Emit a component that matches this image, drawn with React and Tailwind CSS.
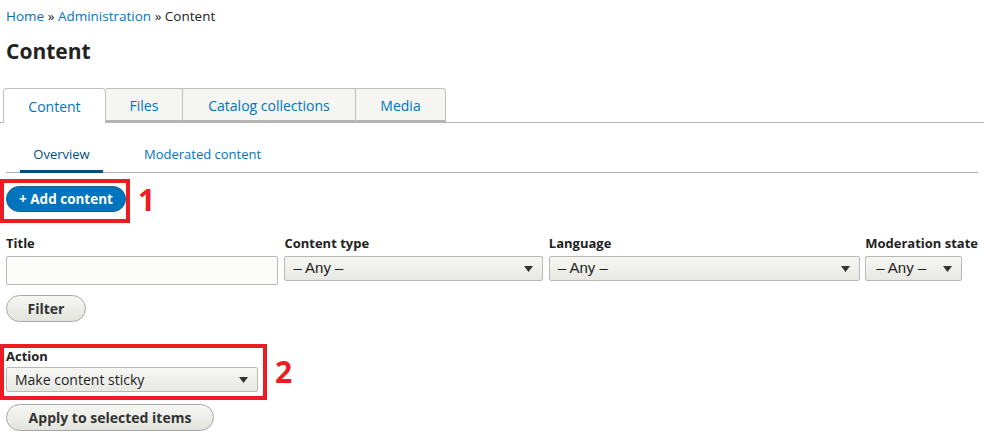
import React from "react";

const Caret = () => (
  <svg width="9" height="6" viewBox="0 0 9 6" className="shrink-0">
    <path d="M0 0 L9 0 L4.5 6 Z" fill="#333" />
  </svg>
);

const Select = ({ value, className, font }) => (
  <div
    className={
      "flex items-center justify-between h-[25px] pl-2 pr-[9px] border border-[#b8b8b8] rounded-[2px] bg-gradient-to-b from-[#f6f6f3] to-[#e8e8e3] text-[#222] " +
      className
    }
    style={{ fontFamily: font || '"Liberation Sans", Arial, sans-serif' }}
  >
    <span>{value}</span>
    <Caret />
  </div>
);

const tabs = [
  { label: "Content", w: "w-[103px]", active: true },
  { label: "Files", w: "w-[77px]" },
  { label: "Catalog collections", w: "w-[173px]" },
  { label: "Media", w: "w-[90px]" },
];

export default function App() {
  return (
    <div
      className="w-[984px] h-[436px] bg-white overflow-hidden text-[13px] text-[#222]"
      style={{ fontFamily: '"Open Sans", "Noto Sans", sans-serif' }}
    >
      <div className="px-[6px] pt-[6px]">
        <div className="h-[20px] leading-[20px] text-[13.5px]">
          <a className="text-[#0074bd]">Home</a> » <a className="text-[#0074bd]">Administration</a> » Content
        </div>
        <h1 className="mt-[12px] text-[21px] leading-[26px] font-bold text-[#222]">Content</h1>
      </div>

      <div className="mt-[24px] flex border-b border-[#b3b3b3] pl-[3px] h-[35px]">
        {tabs.map((t) => (
          <div
            key={t.label}
            className={
              t.w +
              " flex items-center justify-center text-[14px] text-[#0074bd] border-t border-r border-[#bfbfbf] " +
              (t.active
                ? "bg-white border-l rounded-tl-[4px] rounded-tr-[4px] -mb-px h-[35px]"
                : "bg-[#f5f5f2] shadow-[inset_0_-2px_0_#b3b3b3] last:rounded-tr-[4px]")
            }
          >
            {t.label}
          </div>
        ))}
      </div>

      <div className="mx-[6px] mt-[13px] flex border-b border-[#b3b3b3] h-[37px]">
        <div className="w-[97px] flex">
          <div className="w-[83px] ml-[14px] flex items-end justify-center pb-[6px] text-[#004f80] border-b-[3px] border-[#004f80] -mb-px">
            Overview
          </div>
        </div>
        <div className="ml-[41px] flex items-end pb-[8px] text-[#0074bd]">Moderated content</div>
      </div>

      <div className="mt-[6px] flex items-center">
        <div className="border-[4px] border-[#ed1c24] w-[130px] h-[44px] pt-[3px] pl-[2px]">
          <div className="w-[120px] h-[26px] rounded-full bg-[#0074bd] border border-[#1e5c90] text-white font-bold text-[13.5px] flex items-center justify-center">
            + Add content
          </div>
        </div>
        <div className="ml-[8px] text-[#ed1c24] font-bold text-[30px] leading-none -mt-[2px]">1</div>
      </div>

      <div className="mt-[10px] flex px-[6px]">
        <div className="w-[279px]">
          <div className="font-bold h-[23px] leading-[21px]">Title</div>
          <div className="w-[272px] h-[29px] border border-[#b8b8b8] rounded-[2px] bg-[#fcfcfa]" />
        </div>
        <div className="w-[265px]">
          <div className="font-bold h-[23px] leading-[21px]">Content type</div>
          <Select value="– Any –" className="w-[259px] text-[15px]" />
        </div>
        <div className="w-[317px]">
          <div className="font-bold h-[23px] leading-[21px]">Language</div>
          <Select value="– Any –" className="w-[311px] text-[15px]" />
        </div>
        <div>
          <div className="font-bold h-[23px] leading-[21px] whitespace-nowrap">Moderation state</div>
          <Select value="– Any –" className="w-[97px] text-[15px] pl-[10px]" />
        </div>
      </div>

      <div className="px-[6px] mt-[10px]">
        <div className="w-[80px] h-[27px] rounded-full border border-[#a6a6a6] bg-gradient-to-b from-[#f6f6f3] to-[#e4e4de] font-bold text-[14px] text-[#333] flex items-center justify-center">
          Filter
        </div>
      </div>

      <div className="mt-[22px] flex items-center">
        <div className="border-[4px] border-[#ed1c24] w-[267px] h-[56px] pl-[2px]">
          <div className="font-bold h-[19px] leading-[16px]">Action</div>
          <Select
            value="Make content sticky"
            className="w-[252px] h-[24px] text-[14px]"
            font='"Open Sans", "Noto Sans", sans-serif'
          />
        </div>
        <div className="ml-[8px] text-[#ed1c24] font-bold text-[30px] leading-none">2</div>
      </div>

      <div className="px-[6px] mt-[4px]">
        <div className="w-[208px] h-[27px] rounded-full border border-[#a6a6a6] bg-gradient-to-b from-[#f6f6f3] to-[#e4e4de] font-bold text-[14px] text-[#333] flex items-center justify-center">
          Apply to selected items
        </div>
      </div>
    </div>
  );
}
